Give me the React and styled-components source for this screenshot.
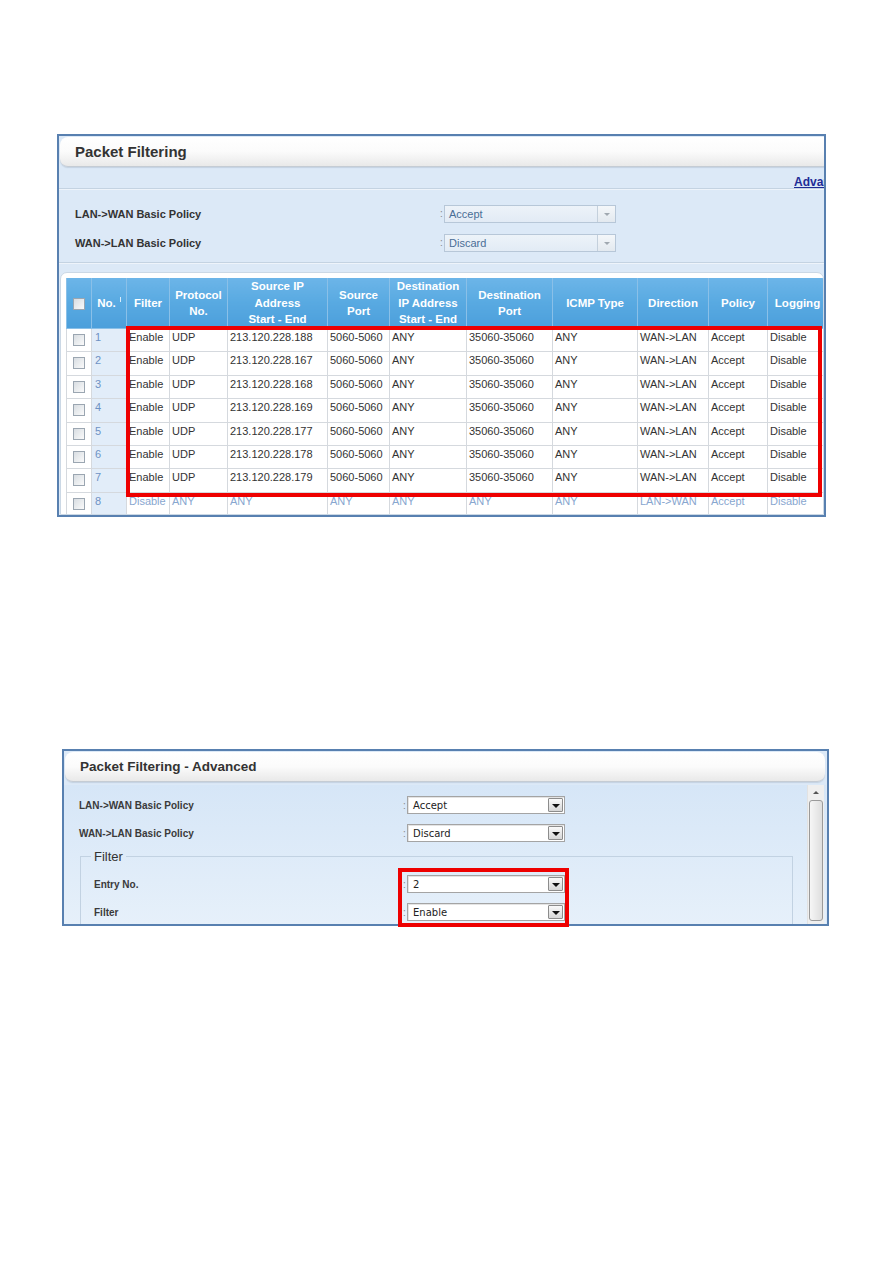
import React from "react";
import styled, { createGlobalStyle } from "styled-components";

const Global = createGlobalStyle`
  html, body { margin: 0; padding: 0; background: #fff; }
  body { font-family: "Liberation Sans", Arial, sans-serif; color: #333; }
  #root { min-height: 1263px; }
`;

const Page = styled.div`
  display: flex;
  flex-direction: column;
  align-items: flex-start;
  padding-top: 134px;
`;

const Frame = styled.div`
  position: relative;
  margin-left: ${(p) => p.$left}px;
  margin-top: ${(p) => p.$top || 0}px;
`;

const Panel = styled.div`
  box-sizing: border-box;
  width: ${(p) => p.$w}px;
  height: ${(p) => p.$h}px;
  border: 2px solid #5880b0;
  background: #dce9f7;
  overflow: hidden;
  display: flex;
  flex-direction: column;
`;

const TitleBar = styled.div`
  box-sizing: border-box;
  height: 30px;
  margin: 1px ${(p) => p.$mr || 0}px 0 1px;
  border-radius: 8px;
  background: linear-gradient(#ffffff 0%, #fbfbfb 50%, #e9e9e9 100%);
  border-bottom: 1px solid #c5ccd4;
  box-shadow: 0 1px 1px rgba(120, 140, 160, 0.25);
  display: flex;
  align-items: center;
  padding-left: ${(p) => p.$pl}px;
  font-size: ${(p) => p.$fs}px;
  font-weight: bold;
  color: #333;
  flex-shrink: 0;
`;

const LinkRow = styled.div`
  height: 21px;
  padding-left: 735px;
  box-sizing: border-box;
  padding-top: 7px;
  line-height: 13px;
  white-space: nowrap;
  flex-shrink: 0;
`;

const Link = styled.a`
  font-size: 12px;
  font-weight: bold;
  color: #1f2c96;
  text-decoration: underline;
`;

const Separator = styled.div`
  height: 1px;
  background: #c4d3e2;
  border-bottom: 1px solid #eef4fb;
  flex-shrink: 0;
`;

const PolicyBlock = styled.div`
  padding: 9px 0 5px 16px;
  flex-shrink: 0;
`;

const FormRow = styled.div`
  display: grid;
  grid-template-columns: ${(p) => p.$label}px 4px auto;
  align-items: center;
  height: ${(p) => p.$h}px;
`;

const Label = styled.span`
  font-size: 11px;
  font-weight: bold;
  color: #333;
`;

const Colon = styled.span`
  font-size: 10px;
  color: #888;
`;

const SoftSelect = styled.div`
  box-sizing: border-box;
  width: 172px;
  height: 18px;
  border: 1px solid #b7c7d8;
  background: linear-gradient(#edf3f9, #e2ebf5);
  display: flex;
  align-items: center;
  font-size: 11px;
  color: #4a6e96;
`;

const SelectText = styled.span`
  flex: 1;
  padding-left: ${(p) => p.$pl || 4}px;
`;

const SoftButton = styled.span`
  box-sizing: border-box;
  width: 18px;
  height: 16px;
  border-left: 1px solid #c4d0dc;
  background: linear-gradient(#f4f7fa, #e3e9ef);
  display: flex;
  align-items: center;
  justify-content: center;
  &::after {
    content: "";
    border-left: 3px solid transparent;
    border-right: 3px solid transparent;
    border-top: 3px solid #a0a8b0;
    margin-top: 2px;
  }
`;

const TableBox = styled.div`
  margin: 8px 0 0 1px;
  padding: 5px 0 0 5px;
  border: 1px solid #cbd8e5;
  border-radius: 7px 7px 0 0;
  background: #ffffff;
  flex: 1;
  overflow: hidden;
`;

const Table = styled.table`
  border-collapse: collapse;
  table-layout: fixed;
  width: 761px;
  font-size: 11px;
`;

const Th = styled.th`
  height: 50px;
  padding: 0 2px;
  border: 1px solid #8ac0e8;
  border-top: none;
  background: linear-gradient(#6cb5e8 0%, #58a9e1 50%, #4c9fdb 100%);
  color: #ffffff;
  font-weight: bold;
  font-size: 11.5px;
  line-height: 16.5px;
  text-align: center;
  vertical-align: middle;
`;

const Tick = styled.span`
  display: inline-block;
  width: 1px;
  height: 5px;
  margin-left: 4px;
  vertical-align: 5px;
  background: #d9ecfa;
`;

const Tr = styled.tr`
  height: 23.4px;
`;

const Td = styled.td`
  border: 1px solid #d5d9de;
  padding: 1px 2px 0 ${(p) => (p.$num ? 3 : 2)}px;
  vertical-align: top;
  line-height: 14px;
  white-space: nowrap;
  overflow: hidden;
  color: ${(p) => (p.$num ? "#6e92c4" : p.$dim ? "#88a6cf" : "#333")};
  background: ${(p) => (p.$num ? "#e2edf9" : "#ffffff")};
  text-align: ${(p) => (p.$center ? "center" : "left")};
`;

const Check = styled.span`
  display: inline-block;
  box-sizing: border-box;
  width: 12px;
  height: 12px;
  margin-top: ${(p) => p.$mt ?? 4}px;
  border: 1px solid #9ba6b1;
  background: linear-gradient(135deg, #d8dde2, #fafafa);
  vertical-align: ${(p) => p.$va || "top"};
`;

const RedBox = styled.div`
  position: absolute;
  left: ${(p) => p.$x}px;
  top: ${(p) => p.$y}px;
  width: ${(p) => p.$w}px;
  height: ${(p) => p.$h}px;
  box-sizing: border-box;
  border: 4px solid #ee0000;
  pointer-events: none;
`;

/* ---------- Advanced panel ---------- */

const Body = styled.div`
  flex: 1;
  display: flex;
  margin: 3px 1px 0 0;
  background: linear-gradient(#d6e6f7, #e6f0fa);
  min-height: 0;
`;

const Main = styled.div`
  flex: 1;
  padding: 6px 14px 0 15px;
`;

const PlainSelect = styled.div`
  box-sizing: border-box;
  width: 158px;
  height: 18px;
  border: 1px solid #a4a4a4;
  box-shadow: inset 1px 1px 0 #e4e4e4;
  background: #ffffff;
  display: flex;
  align-items: center;
  color: #222;
  font-family: "DejaVu Sans", Tahoma, sans-serif;
  font-size: 10px;
`;

const DarkButton = styled.span`
  box-sizing: border-box;
  width: 15px;
  height: 14px;
  margin-right: 1px;
  border: 1px solid #8c8c8c;
  border-radius: 1px;
  background: linear-gradient(#fafafa, #d6d6d6);
  display: flex;
  align-items: center;
  justify-content: center;
  &::after {
    content: "";
    border-left: 4px solid transparent;
    border-right: 4px solid transparent;
    border-top: 4px solid #111;
    margin-top: 1px;
  }
`;

const Fieldset = styled.fieldset`
  margin: 2px 0 0 1px;
  padding: 6px 0 0 13px;
  border: 1px solid #c2d2e2;
  border-bottom: none;
  min-width: 0;
`;

const Legend = styled.legend`
  padding: 0 3px;
  margin-left: -3px;
  font-size: 13px;
  line-height: 15px;
  color: #333;
`;

const AdvLabel = styled.span`
  font-size: 10px;
  font-weight: bold;
  color: #3a3a3a;
`;

const Scrollbar = styled.div`
  width: 16px;
  margin-right: 2px;
  background: #efefef;
  border-left: 1px solid #e2e2e2;
  display: flex;
  flex-direction: column;
  align-items: center;
`;

const ArrowUp = styled.span`
  margin-top: 6px;
  width: 0;
  height: 0;
  border-left: 3px solid transparent;
  border-right: 3px solid transparent;
  border-bottom: 3px solid #555;
`;

const Thumb = styled.span`
  box-sizing: border-box;
  width: 14px;
  flex: 1;
  margin: 6px 0 3px;
  border: 1px solid #9a9a9a;
  border-radius: 3px;
  background: linear-gradient(90deg, #f6f6f6, #dedede);
`;

const columns = [
  { w: 25, h: <Check $mt={0} $va="middle" /> },
  { w: 35, h: (<>No.<Tick /></>) },
  { w: 43, h: "Filter" },
  { w: 58, h: (<>Protocol<br />No.</>) },
  { w: 100, h: (<>Source IP<br />Address<br />Start - End</>) },
  { w: 62, h: (<>Source<br />Port</>) },
  { w: 77, h: (<>Destination<br />IP Address<br />Start - End</>) },
  { w: 86, h: (<>Destination<br />Port</>) },
  { w: 85, h: "ICMP Type" },
  { w: 71, h: "Direction" },
  { w: 59, h: "Policy" },
  { w: 60, h: "Logging" },
];

const ips = ["188", "167", "168", "169", "177", "178", "179"];

const rows = [
  ...ips.map((s, i) => ({
    n: i + 1,
    dim: false,
    v: ["Enable", "UDP", `213.120.228.${s}`, "5060-5060", "ANY", "35060-35060", "ANY", "WAN->LAN", "Accept", "Disable"],
  })),
  { n: 8, dim: true, v: ["Disable", "ANY", "ANY", "ANY", "ANY", "ANY", "ANY", "LAN->WAN", "Accept", "Disable"] },
];

function SoftSel({ value }) {
  return (
    <SoftSelect>
      <SelectText>{value}</SelectText>
      <SoftButton />
    </SoftSelect>
  );
}

function PlainSel({ value }) {
  return (
    <PlainSelect>
      <SelectText $pl={5}>{value}</SelectText>
      <DarkButton />
    </PlainSelect>
  );
}

export default function App() {
  return (
    <Page>
      <Global />
      <Frame $left={57}>
        <Panel $w={769} $h={383}>
          <TitleBar $pl={15} $fs={15} $mr={-12}>Packet Filtering</TitleBar>
          <LinkRow>
            <Link>Advanced</Link>
          </LinkRow>
          <Separator />
          <PolicyBlock>
            <FormRow $label={365} $h={29}>
              <Label>LAN-&gt;WAN Basic Policy</Label>
              <Colon>:</Colon>
              <SoftSel value="Accept" />
            </FormRow>
            <FormRow $label={365} $h={29}>
              <Label>WAN-&gt;LAN Basic Policy</Label>
              <Colon>:</Colon>
              <SoftSel value="Discard" />
            </FormRow>
          </PolicyBlock>
          <Separator />
          <TableBox>
            <Table>
              <colgroup>
                {columns.map((c, i) => (
                  <col key={i} style={{ width: c.w }} />
                ))}
              </colgroup>
              <thead>
                <tr>
                  {columns.map((c, i) => (
                    <Th key={i}>{c.h}</Th>
                  ))}
                </tr>
              </thead>
              <tbody>
                {rows.map((r) => (
                  <Tr key={r.n}>
                    <Td $center>
                      <Check />
                    </Td>
                    <Td $num>{r.n}</Td>
                    {r.v.map((v, i) => (
                      <Td key={i} $dim={r.dim}>
                        {v}
                      </Td>
                    ))}
                  </Tr>
                ))}
              </tbody>
            </Table>
          </TableBox>
        </Panel>
        <RedBox $x={69} $y={192} $w={696} $h={171} />
      </Frame>

      <Frame $left={62} $top={232}>
        <Panel $w={767} $h={177}>
          <TitleBar $pl={15} $fs={13.5} $mr={2}>Packet Filtering - Advanced</TitleBar>
          <Body>
            <Main>
              <FormRow $label={324} $h={28}>
                <AdvLabel>LAN-&gt;WAN Basic Policy</AdvLabel>
                <Colon>:</Colon>
                <PlainSel value="Accept" />
              </FormRow>
              <FormRow $label={324} $h={28}>
                <AdvLabel>WAN-&gt;LAN Basic Policy</AdvLabel>
                <Colon>:</Colon>
                <PlainSel value="Discard" />
              </FormRow>
              <Fieldset>
                <Legend>Filter</Legend>
                <FormRow $label={309} $h={28}>
                  <AdvLabel>Entry No.</AdvLabel>
                  <Colon>:</Colon>
                  <PlainSel value="2" />
                </FormRow>
                <FormRow $label={309} $h={28}>
                  <AdvLabel>Filter</AdvLabel>
                  <Colon>:</Colon>
                  <PlainSel value="Enable" />
                </FormRow>
              </Fieldset>
            </Main>
            <Scrollbar>
              <ArrowUp />
              <Thumb />
            </Scrollbar>
          </Body>
        </Panel>
        <RedBox $x={336} $y={119} $w={171} $h={59} />
      </Frame>
    </Page>
  );
}
